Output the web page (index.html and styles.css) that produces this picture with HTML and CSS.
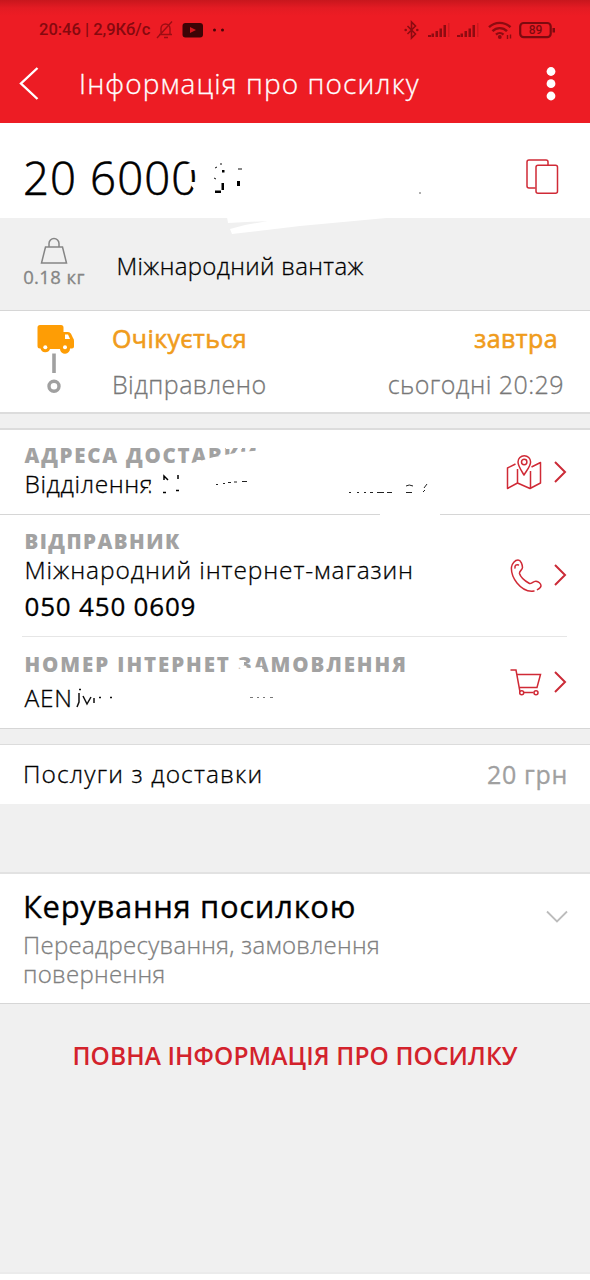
FILE: index.html
```html
<!DOCTYPE html>
<html lang="uk">
<head>
<meta charset="utf-8">
<title>Інформація про посилку</title>
<link rel="stylesheet" href="styles.css">
</head>
<body>
<header class="header">
  <div class="statusbar">
    <span class="clock">20:46 | 2,9Кб/с</span>
    <svg class="status-left" width="72" height="22" viewBox="0 0 72 22">
      <g fill="none" stroke="#9c0d13" stroke-width="1.4"><path d="M3 15.500h13M5 15.500V9.500a4.500 4.500 0 0 1 9 0v6M8 18.500h4M1 19 16 2.500"/></g>
      <rect x="26.500" y="4" width="20.500" height="14.500" rx="3" fill="#3d0406"/>
      <path d="M34 8v6l6-3z" fill="#d2161d"/>
      <circle cx="58.500" cy="11" r="1.500" fill="#4a0508"/><circle cx="66.500" cy="11" r="1.500" fill="#4a0508"/>
    </svg>
    <svg class="status-right" width="154" height="22" viewBox="0 0 154 22">
      <g fill="none" stroke="#8d0b11" stroke-width="1.600"><path d="M3.500 7 11.500 15 7.500 19V3l4 4-8 8"/></g>
      <circle cx="1.700" cy="11" r="1.300" fill="#8d0b11"/><circle cx="13.300" cy="11" r="1.300" fill="#8d0b11"/>
      <g fill="#8d0b11">
        <path d="M24 16h3v2h-3zM27.500 14.500H30V18h-2.500zM31.500 12H34v6h-2.500zM35.500 9.500H38V18h-2.500zM39.500 6H42v12h-2.500z"/>
        <path d="M53 16h3v2h-3zM56.500 14.500H59V18h-2.500zM60.500 12H63v6h-2.500zM64.500 9.500H67V18h-2.500zM68.500 6H71v12h-2.500z"/>
      </g>
      <path d="M44 4h1.500v14H44zM73 4h1.500v14H73z" fill="#d0171e"/>
      <g fill="none" stroke="#8d0b11" stroke-width="2.400"><path d="M85 8.200a15.500 15.500 0 0 1 21.500 0M88.500 12.200a10 10 0 0 1 14.500 0M92 15.600a5.500 5.500 0 0 1 7.500 0"/></g>
      <circle cx="95.800" cy="18" r="1.900" fill="#8d0b11"/>
      <path d="M103.500 16v4M106.500 15.500v4" stroke="#8d0b11" stroke-width="1.400"/>
      <rect x="116.200" y="4" width="30.500" height="14.200" rx="3.500" fill="none" stroke="#7d0a0f" stroke-width="2.200"/>
      <rect x="148.500" y="9" width="2.500" height="4.500" fill="#7d0a0f"/>
      <text x="131.500" y="15.400" class="battery">89</text>
    </svg>
  </div>
  <div class="titlebar">
    <svg width="22" height="34" viewBox="0 0 22 34"><path d="M19.500 2 3 17.500 19.500 33" fill="none" stroke="#fff" stroke-width="2.400"/></svg>
    <h1 class="title">Інформація про посилку</h1>
    <svg width="12" height="36" viewBox="0 0 12 36" fill="#fff"><circle cx="6" cy="6.500" r="4.400"/><circle cx="6" cy="18.700" r="4.400"/><circle cx="6" cy="31" r="4.400"/></svg>
  </div>
</header>

<section class="number-row">
  <div class="number">20 6000</div>
  <svg class="copy" width="34" height="36" viewBox="0 0 34 36" fill="none" stroke="#d02a36" stroke-width="1.500"><path d="M10.500 29H4a2 2 0 0 1-2-2V3a2 2 0 0 1 2-2h17a2 2 0 0 1 2 2v3"/><rect x="11" y="6.300" width="21.500" height="28" rx="2"/></svg>
  <svg class="smudge" width="590" height="120" viewBox="0 123 590 120">
    <path fill="#fff" d="M180 167 190 163 202 162V170H191L190 178 183 179zM188 182h12v6l-5 2z"/>
    <path fill="#fff" d="M227 217h170L300 226 232 234 230 229 245 225 268 221 228 223z"/>
    <path stroke="#111" fill="none" d="M215 168l2-1M220 164h2M238 169h4M214 178l2 1"/>
    <path fill="#000" d="M215 190.500h6v2.500h-6zM221.500 183h2.500v7h-2.500zM237 181h3v5h-3zM222 170h2.500v2.500H222z"/>
    <circle cx="420" cy="193" r=".7" fill="#222"/>
  </svg>
</section>

<section class="cargo">
  <div class="weight">
    <svg width="28" height="27" viewBox="0 0 28 27" fill="none" stroke="#858585" stroke-width="1.500"><path d="M5.500 10h17l4 16H1.500zM9 10V6.500a5 5 0 0 1 10 0V10"/></svg>
    <span class="kg">0.18 кг</span>
  </div>
  <div class="cargo-name">Міжнародний вантаж</div>
</section>

<section class="status">
  <svg class="track" width="40" height="72" viewBox="0 0 40 72">
    <path fill="#fe9d05" d="M3 0h21q2.500 0 2.500 2.500V7H31q2 0 3 1.700l2 4.300q1 1 1 3v5.500q0 2-2 2h-2a5 5 0 0 1-10 .5H13a5 5 0 0 1-9.500-.5H3q-2.500 0-2.500-2.500V2.500Q.500 0 3 0z"/>
    <path fill="#fff" d="M28 9.500h3l2 4.500h-5z"/><circle cx="8.300" cy="22.300" r="2" fill="#fff"/><circle cx="28" cy="22.300" r="2" fill="#fff"/>
    <path d="M17 28.500v19.500" stroke="#a0a0a0" stroke-width="3.600"/>
    <circle cx="17" cy="61.300" r="5" fill="none" stroke="#a0a0a0" stroke-width="3.400"/>
  </svg>
  <div class="status-lines">
    <div class="line expected"><span>Очікується</span><span>завтра</span></div>
    <div class="line sent"><span>Відправлено</span><span>сьогодні 20:29</span></div>
  </div>
</section>

<section class="details">
  <div class="item address">
    <div class="text">
      <div class="label">АДРЕСА ДОСТАВКИ</div>
      <div class="value">Відділення</div>
    </div>
    <div class="actions">
      <svg width="36" height="36" viewBox="0 0 36 36" fill="none" stroke="#d02a36" stroke-width="1.500" stroke-linejoin="round"><path d="M9.500 10 1.500 14v20.500l10-5.500 12.500 5.500 10.500-5.500V8.500l-9 4.500M11.500 15v14M24.500 17v17"/><path d="M18 21c-3-5-6-9-6-13a6.300 6.300 0 0 1 12.600 0c0 4-3.600 8-6.600 13z"/><circle cx="18.200" cy="8" r="2.700"/></svg>
      <svg width="14" height="24" viewBox="0 0 14 24"><path class="chev" d="M2 2 12 12 2 22"/></svg>
    </div>
    <svg class="smudge" width="590" height="92" viewBox="0 430 590 92">
      <path fill="#fff" d="M184 465 200 461 212 457.500 230 454 240 452 264 450V470H184zM149 486 157 476V480L152 491 147 490z"/>
      <path fill="#fff" d="M226 446h6v3h-6zM238 446h4v3h-4z"/>
      <path fill="none" stroke="#000" stroke-width="1.500" d="M164 480v-4l4 4M178 475v4M163 492.500h3M176 490.500h3"/>
      <path fill="none" stroke="#222" d="M216 484.500h2M223 483.500h2M228 482.500h3M234 482h3M242 481.500h5M349 492.500h2M357 492.500h2M364 492.500h2M370 492.500h3M377 492.500h7M387 492.500h5M406 486q3-2 7 0M406 492.500h6M423 492l2-2M427 484l-3 4"/>
      <path fill="#fff" d="M380 513h60v3h-60z"/>
    </svg>
  </div>
  <div class="item sender">
    <div class="text">
      <div class="label">ВІДПРАВНИК</div>
      <div class="value shop">Міжнародний інтернет-магазин</div>
      <div class="phone">050 450 0609</div>
    </div>
    <div class="actions">
      <svg width="36" height="36" viewBox="0 0 36 36" fill="none" stroke="#d02a36" stroke-width="1.500" stroke-linecap="round" stroke-linejoin="round"><path d="M28 34c-7 1-13-3-17-8-4-5-6-11-5.500-16C6 6.500 9 3 12 3c3 0 4.500 5 4.500 7.500S13 14 13.500 16.500C14.500 20 19 24 23.500 26.500c2 .8 3.500-2.500 6.500-2.300 2.500.3 5 2.300 5 4.500 0 1.600-1.800 3-3.500 4"/><path d="M9 11c-.5-2.500 1.500-4 3.500-3"/></svg>
      <svg width="14" height="24" viewBox="0 0 14 24"><path class="chev" d="M2 2 12 12 2 22"/></svg>
    </div>
  </div>
  <div class="rule"></div>
  <div class="item order">
    <div class="text">
      <div class="label">НОМЕР ІНТЕРНЕТ ЗАМОВЛЕННЯ</div>
      <div class="value order-id">AEN</div>
    </div>
    <div class="actions">
      <svg width="36" height="36" viewBox="0 0 36 36" fill="none" stroke="#d02a36" stroke-width="1.500"><path d="M4.500 6H10l4 22M10.500 10.500h24L31 23.500H13.500M17.500 28.500h10"/><circle cx="15.700" cy="28.700" r="2"/><circle cx="30" cy="28.700" r="2"/></svg>
      <svg width="14" height="24" viewBox="0 0 14 24"><path class="chev" d="M2 2 12 12 2 22"/></svg>
    </div>
    <svg class="smudge" width="590" height="90" viewBox="0 637 590 90">
      <path fill="#fff" d="M223 675 230 672 244 667 249 668 262 667 264 675zM240 660h4v5l-4 3z"/>
      <path fill="none" stroke="#111" stroke-width="1.500" d="M79 689.500h2M79 693v9l-2 5M83 696l4 8 4-7M94 698v5M99 697.500h2M110 697.500h2"/>
      <path fill="none" stroke="#555" stroke-width=".8" d="M250 697.500h3M257 697.500h2M263 697.500h2M270 697.500h3"/>
    </svg>
  </div>
</section>

<section class="services">
  <span class="services-name">Послуги з доставки</span>
  <span class="price">20 грн</span>
</section>

<section class="manage">
  <div>
    <h2 class="manage-title">Керування посилкою</h2>
    <p class="manage-sub">Переадресування, замовлення<br>повернення</p>
  </div>
  <svg class="down" width="24" height="14" viewBox="0 0 24 14"><path d="M2 1.500 12 11.500 22 1.500" fill="none" stroke="#bcbcbc" stroke-width="1.800"/></svg>
</section>

<div class="full-info">ПОВНА ІНФОРМАЦІЯ ПРО ПОСИЛКУ</div>
<div class="bottom"></div>
</body>
</html>
```
FILE: styles.css
```css
* { box-sizing: border-box; }
body {
  margin: 0;
  width: 590px;
  height: 1280px;
  display: flex;
  flex-direction: column;
  background: #f0f0f0;
  color: #000;
  font-family: "Open Sans", "Noto Sans", sans-serif;
  font-weight: 300;
  -webkit-text-stroke: 0.3px currentColor;
  white-space: nowrap;
  overflow: hidden;
}
svg { display: block; flex: none; }
h1, h2, p { margin: 0; font-weight: inherit; }
section { flex: none; position: relative; }

.header {
  height: 123px;
  flex: none;
  background: linear-gradient(#c8161d 0, #e41b23 8px, #ed1c24 16px);
}
.statusbar {
  display: flex;
  align-items: center;
  height: 60px;
  padding: 22px 0 22px 39px;
  -webkit-text-stroke: 0;
}
.clock {
  width: 117px;
  font: 500 16.5px/16px Roboto, sans-serif;
  color: #86090f;
}
.status-left { margin-top: -1px; }
.status-right { margin: -1px 0 0 176px; }
.battery {
  font: 500 12px Roboto, sans-serif;
  fill: #7d0a0f;
  text-anchor: middle;
}
.titlebar {
  display: flex;
  align-items: center;
  height: 46px;
  padding: 0 33px 0 18px;
}
.title {
  flex: 1;
  margin: 0 0 0 39px;
  font-size: 28px;
  line-height: 40px;
  letter-spacing: 1.1px;
  color: #fff;
}

.smudge { position: absolute; left: 0; top: 0; z-index: 1; }

.number-row {
  z-index: 1;
  display: flex;
  justify-content: space-between;
  height: 95px;
  padding: 24px 31px 0 23px;
  background: #fff;
}
.number {
  font-size: 45.5px;
  line-height: 60px;
  letter-spacing: 1.1px;
  -webkit-text-stroke-width: 0.6px;
}
.copy { margin-top: 12px; }

.cargo {
  display: flex;
  height: 93px;
  border-bottom: 1px solid #d6d6d6;
}
.weight {
  width: 108px;
  padding-top: 19px;
  display: flex;
  flex-direction: column;
  align-items: center;
}
.kg {
  margin-top: 1px;
  font-size: 18.5px;
  font-weight: 400;
  line-height: 24px;
  letter-spacing: 0.4px;
  color: #858585;
}
.cargo-name {
  margin: 32px 0 0 8.5px;
  font-size: 24px;
  line-height: 32px;
  letter-spacing: 0.35px;
}

.status {
  display: flex;
  height: 103px;
  padding-top: 4px;
  background: #fff;
  border-bottom: 2px solid #dcdcdc;
}
.track { margin: 10px 0 0 37px; }
.status-lines { flex: 1; padding-left: 35px; }
.line {
  display: flex;
  justify-content: space-between;
  font-size: 25px;
  line-height: 46px;
}
.expected {
  padding-right: 32px;
  font-weight: 400;
  letter-spacing: 0.4px;
  -webkit-text-stroke-width: 0.6px;
  color: #f09c1c;
}
.sent {
  padding-right: 26px;
  letter-spacing: 0.45px;
  color: #777;
}

.details {
  margin-top: 14px;
  border-top: 2px solid #dcdcdc;
  border-bottom: 1px solid #d6d6d6;
  background: #fff;
}
.item {
  position: relative;
  display: flex;
  justify-content: space-between;
  padding-left: 24.5px;
}
.address { height: 85px; border-bottom: 1px solid #d6d6d6; }
.sender { height: 121px; }
.order { height: 91px; }
.text { padding-top: 12px; }
.sender .text { padding-top: 13px; }
.order .text { padding-top: 14px; }
.label {
  font-size: 20.5px;
  font-weight: 800;
  line-height: 27px;
  letter-spacing: 1.75px;
  -webkit-text-stroke: 0;
  color: #a2a2a2;
}
.sender .label { letter-spacing: 1.45px; }
.order .label { letter-spacing: 1.91px; }
.value {
  font-size: 24.5px;
  line-height: 30px;
  letter-spacing: 0.6px;
}
.shop { letter-spacing: 0.9px; }
.phone {
  margin-top: 3px;
  font-size: 26px;
  font-weight: 400;
  line-height: 36px;
  letter-spacing: 0.8px;
}
.order-id { margin-top: 5px; letter-spacing: 0.7px; }
.actions {
  display: flex;
  align-items: center;
  gap: 11px;
  padding: 0 23px 1px 0;
}
.chev { fill: none; stroke: #cb2b37; stroke-width: 2; }
.rule { height: 1px; margin: 0 23px 0 22px; background: #e6e6e6; }

.services {
  display: flex;
  justify-content: space-between;
  height: 60px;
  margin-top: 15px;
  padding: 9px 22px 0 23px;
  border-top: 1px solid #dcdcdc;
  background: #fff;
}
.services-name { font-size: 24.5px; line-height: 40px; letter-spacing: 1.12px; }
.price { font-size: 25px; font-weight: 400; line-height: 40px; letter-spacing: 0.68px; color: #a0a0a0; }

.manage {
  display: flex;
  justify-content: space-between;
  height: 132px;
  margin-top: 68px;
  padding: 12px 21px 0 23px;
  border-top: 2px solid #e2e2e2;
  border-bottom: 1px solid #d6d6d6;
  background: #fff;
}
.manage-title { font-size: 31px; font-weight: 400; line-height: 40px; letter-spacing: 0.68px; }
.manage-sub { margin-top: 4px; font-size: 24px; line-height: 29px; letter-spacing: 0.3px; color: #808080; }
.down { margin-top: 24px; }

.full-info {
  flex: 1;
  padding-top: 32px;
  text-align: center;
  font-size: 24.5px;
  font-weight: 600;
  line-height: 40px;
  letter-spacing: 0.1px;
  -webkit-text-stroke: 0;
  color: #d3222c;
}
.bottom { height: 8px; flex: none; border-top: 2px solid #ebebeb; background: #fff; }
```
